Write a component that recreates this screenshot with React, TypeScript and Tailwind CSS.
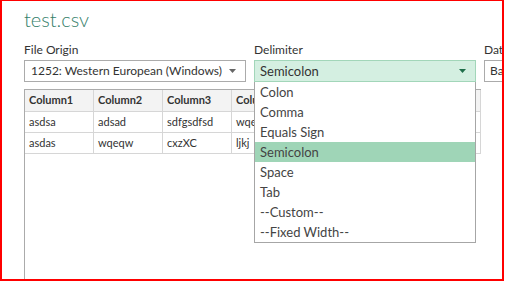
import React from "react";

const items = ["Colon", "Comma", "Equals Sign", "Semicolon", "Space", "Tab", "--Custom--", "--Fixed Width--"];

function Arrow({ color }: { color: string }) {
  return (
    <svg width="7" height="4" viewBox="0 0 7 4" className="shrink-0">
      <polygon points="0,0 7,0 3.5,4" fill={color} />
    </svg>
  );
}

const rows = [
  ["Column1", "Column2", "Column3", "Column4"],
  ["asdsa", "adsad", "sdfgsdfsd", "wqewq"],
  ["asdas", "wqeqw", "cxzXC", "ljkj"],
];

export default function App() {
  return (
    <div className="w-[504px] h-[281px] border-l-2 border-t border-r-2 border-b-2 border-[#ff0000] bg-white overflow-hidden font-['Lato','Segoe_UI',sans-serif] text-[#333]">
      <div className="pl-[22px] pt-[6px] flex flex-col h-full">
        <div className="text-[20px] leading-[24px] font-light text-[#35806a]">test.csv</div>
        <div className="flex gap-[8px] mt-[11px] relative z-10">
          <div className="w-[222px] shrink-0">
            <div className="text-[12px] leading-[16px] text-[#333]">File Origin</div>
            <div className="mt-[2px] h-[22px] border border-[#ababab] bg-white flex items-center justify-between pl-[6px] pr-[9px]">
              <span className="text-[12px] leading-[20px] text-[#333]">1252: Western European (Windows)</span>
              <Arrow color="#666" />
            </div>
          </div>
          <div className="w-[222px] shrink-0 relative">
            <div className="text-[12px] leading-[16px] text-[#333]">Delimiter</div>
            <div className="mt-[2px] h-[22px] border border-[#a2d6b9] bg-[#d4efe1] flex items-center justify-between pl-[5px] pr-[9px]">
              <span className="text-[13px] leading-[20px] text-[#333]">Semicolon</span>
              <Arrow color="#1f6e4a" />
            </div>
            <div className="absolute left-0 top-[40px] w-[222px] border-x border-b border-[#a6a6a6] bg-white">
              {items.map((it) => (
                <div
                  key={it}
                  className={
                    "h-[20px] pl-[5px] text-[13px] leading-[20px] text-[#444] " +
                    (it === "Semicolon" ? "bg-[#9fd5b7]" : "")
                  }
                >
                  {it}
                </div>
              ))}
            </div>
          </div>
          <div className="w-[200px] shrink-0">
            <div className="text-[12px] leading-[16px] text-[#333] whitespace-nowrap">Data Type Detection</div>
            <div className="mt-[2px] h-[22px] border border-[#ababab] bg-white flex items-center pl-[5px]">
              <span className="text-[12px] leading-[20px] text-[#333] whitespace-nowrap">Based on first 200 rows</span>
            </div>
          </div>
        </div>
        <div className="mt-[7px] flex-1 w-[520px] border-l border-[#ababab]">
          <div className="w-[456px] border-t border-[#ababab]">
            {rows.map((r, ri) => (
              <div
                key={ri}
                className={
                  "flex border-b border-[#d6d6d6] " +
                  (ri === 0 ? "h-[22px] bg-[#f3f3f3] font-bold" : "h-[21px] bg-white")
                }
              >
                {r.map((c, ci) => (
                  <div
                    key={ci}
                    className={
                      "border-r border-[#d6d6d6] pl-[4px] text-[11px] leading-[20px] text-[#333] " +
                      (ci === 3 ? "flex-1" : "w-[69px]")
                    }
                  >
                    {c}
                  </div>
                ))}
              </div>
            ))}
          </div>
        </div>
      </div>
    </div>
  );
}
